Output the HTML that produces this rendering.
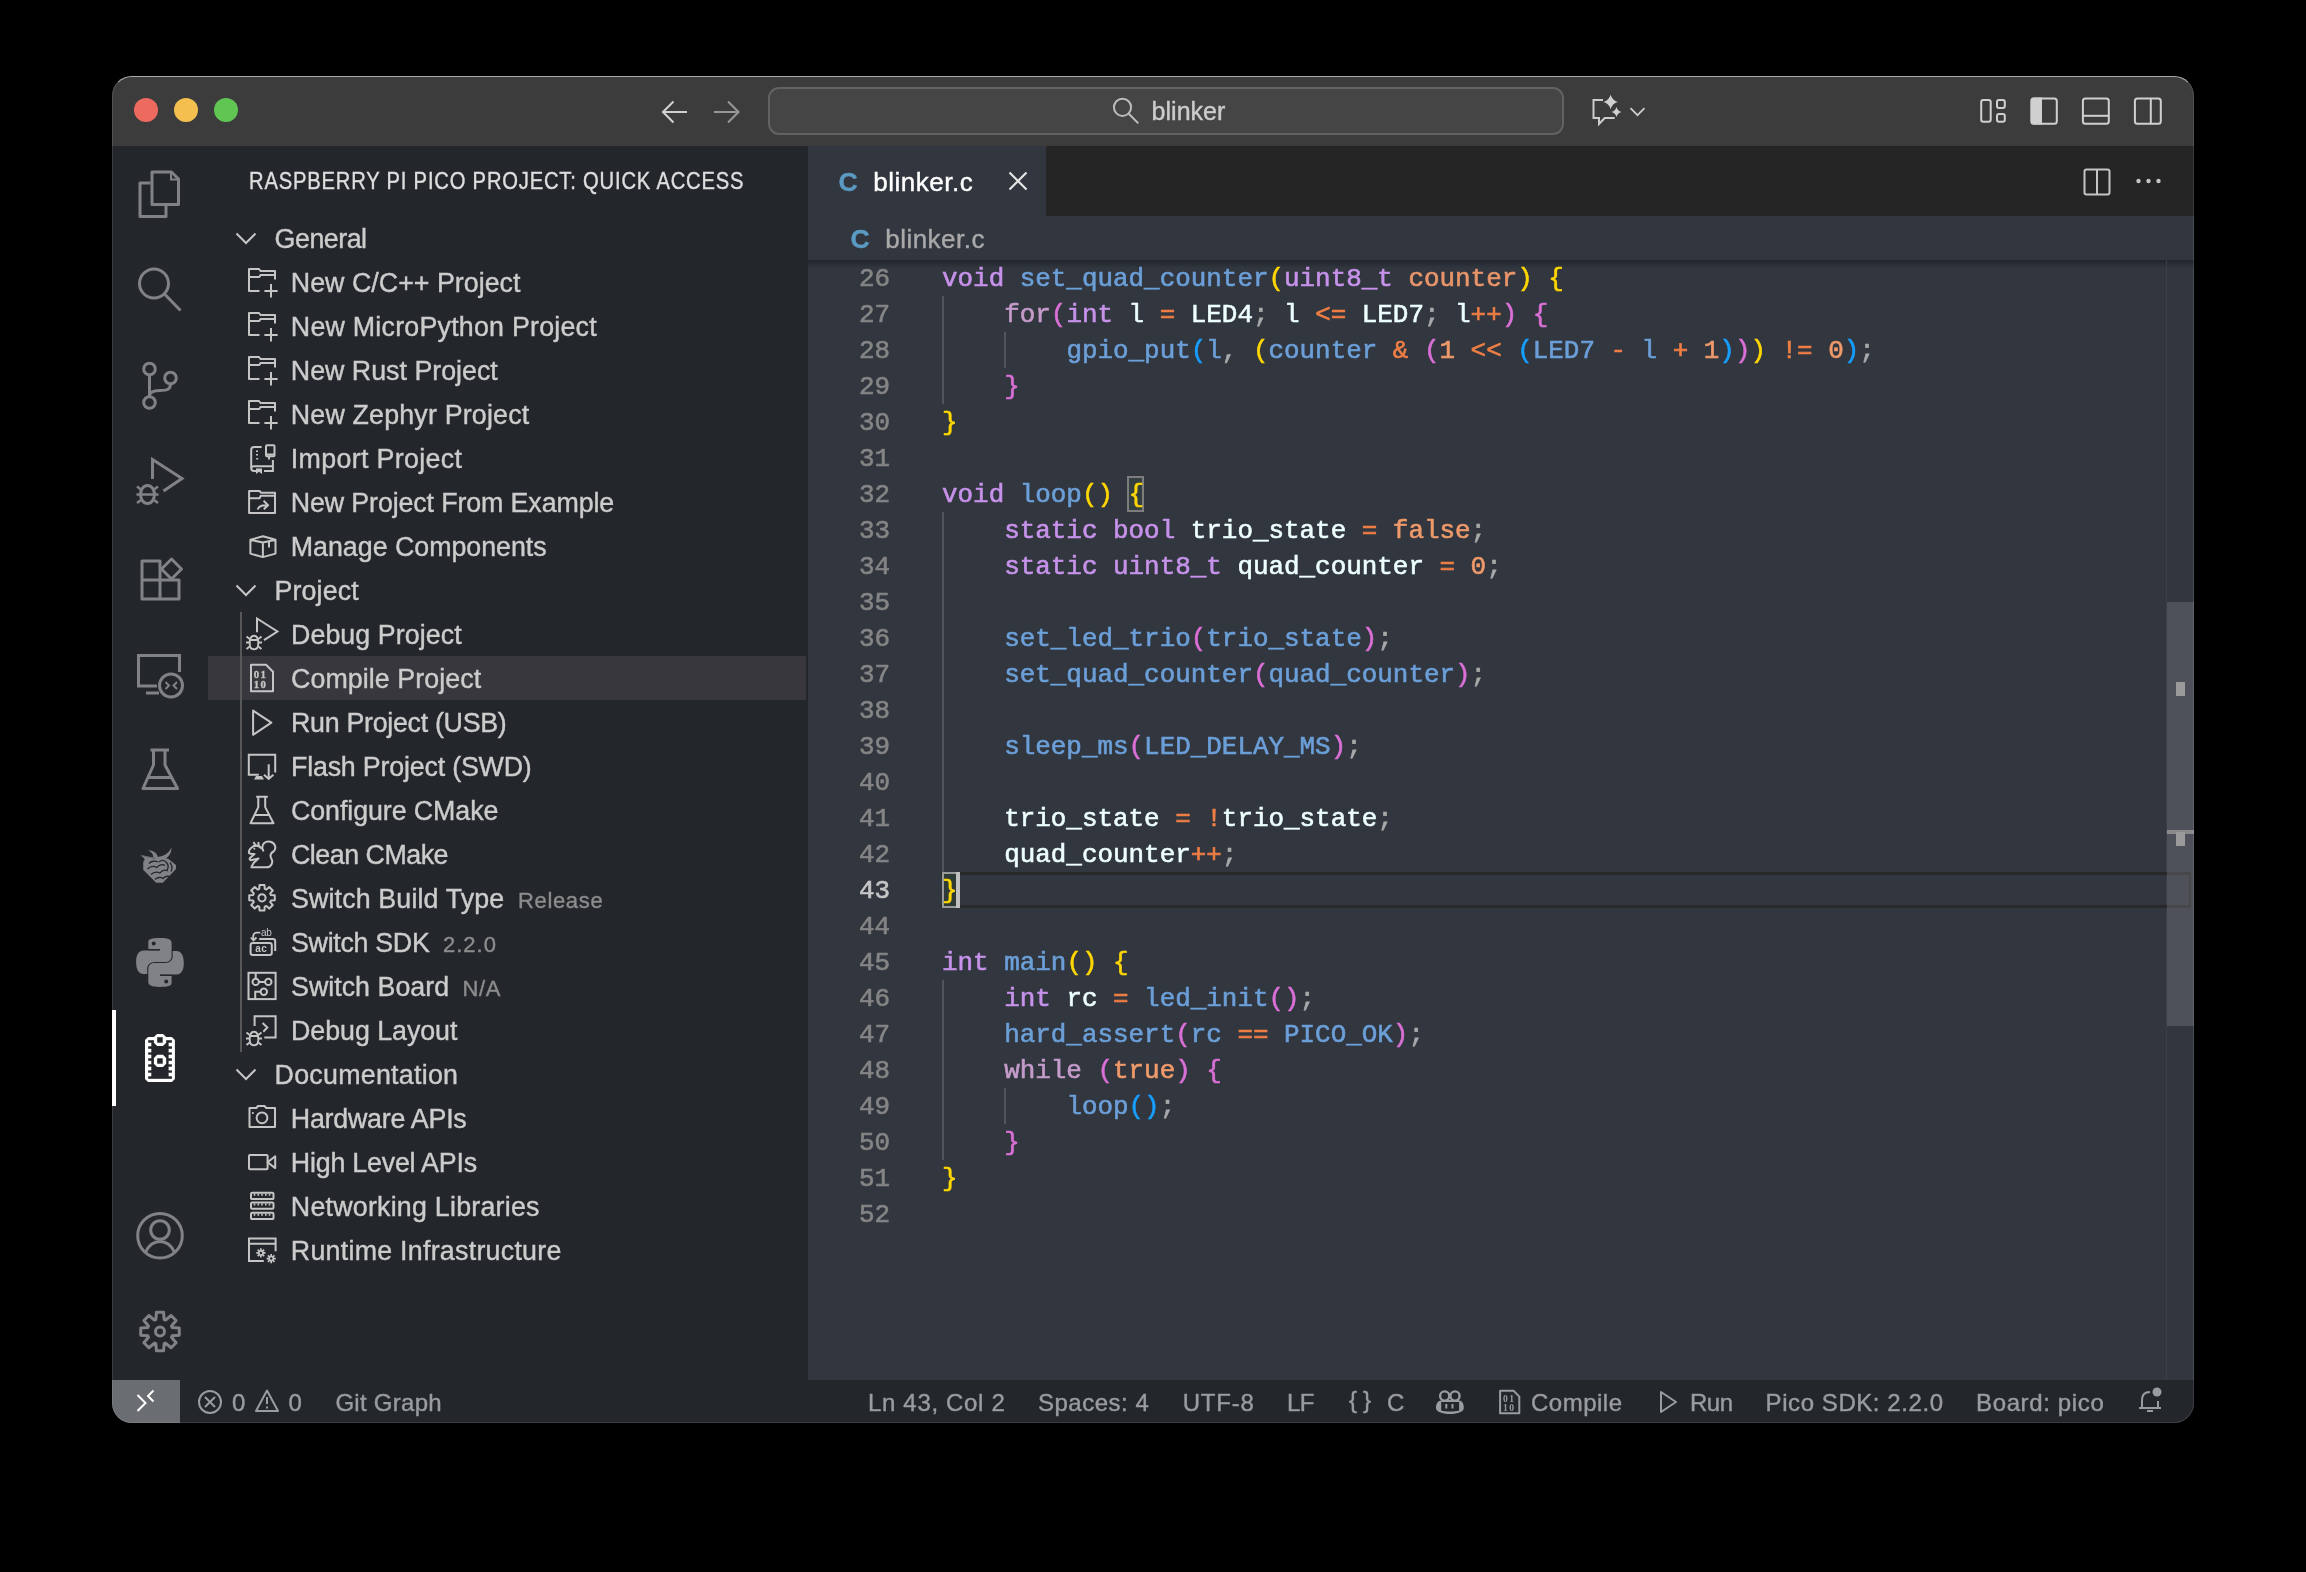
<!DOCTYPE html>
<html><head><meta charset="utf-8"><title>VS Code</title><style>
*{margin:0;padding:0;box-sizing:border-box}
html,body{width:2306px;height:1572px;background:#000;overflow:hidden}
body{position:relative;font-family:"Liberation Sans",sans-serif}
#win{position:absolute;left:112px;top:76px;width:2082px;height:1347px;border-radius:20px;overflow:hidden;background:#23262b}
#frame{position:absolute;left:112px;top:76px;width:2082px;height:1347px;border-radius:20px;border:1px solid rgba(255,255,255,0.11);border-top-color:#a8a8a8;pointer-events:none}
.p{position:absolute}
.t{position:absolute;white-space:pre;line-height:1;-webkit-text-stroke:0.4px}
.cl{position:absolute;left:0;font-family:"Liberation Mono",monospace;font-size:25.92px;white-space:pre;line-height:36px;height:36px;-webkit-text-stroke:0.6px}
svg{position:absolute;left:0;top:0}
</style></head><body>
<div id="win">
<div class="p" style="left:0px;top:0px;width:2082px;height:70px;background:#3c3c3c;"></div>
<div class="p" style="left:656px;top:11px;width:796px;height:48px;background:#454545;border:2px solid #626262;border-radius:11px;"></div>
<div class="p" style="left:696px;top:70px;width:1386px;height:70px;background:#252526;"></div>
<div class="p" style="left:696px;top:70px;width:238px;height:70px;background:#31363f;"></div>
<div class="p" style="left:696px;top:140px;width:1386px;height:1164px;background:#31363f;"></div>
<div class="p" style="left:696px;top:184px;width:1386px;height:8px;background:linear-gradient(#1e2127,rgba(30,33,39,0));opacity:.85;"></div>
<div class="p" style="left:2054px;top:184px;width:1px;height:1120px;background:#3a3f47;"></div>
<div class="p" style="left:829px;top:796px;width:1250px;height:3px;background:#282828;"></div>
<div class="p" style="left:829px;top:829px;width:1250px;height:3px;background:#282828;"></div>
<div class="p" style="left:2077px;top:796px;width:2px;height:36px;background:#282828;"></div>
<div class="p" style="left:830px;top:796px;width:16px;height:36px;background:#2e3a38;border:2px solid #9a9a9a;"></div>
<div class="p" style="left:844px;top:796px;width:4px;height:36px;background:#c0c0c0;"></div>
<div class="p" style="left:2055px;top:526px;width:27px;height:424px;background:rgba(125,127,132,0.38);"></div>
<div class="p" style="left:2064px;top:606px;width:9px;height:14px;background:#9a9a9a;"></div>
<div class="p" style="left:2055px;top:754px;width:27px;height:4px;background:#8a8a8a;"></div>
<div class="p" style="left:2064px;top:756px;width:9px;height:14px;background:#9a9a9a;"></div>
<div class="p" style="left:96px;top:580px;width:598px;height:44px;background:#37373d;"></div>
<div class="p" style="left:128px;top:536px;width:2px;height:440px;background:#585858;"></div>
<div class="p" style="left:0px;top:934px;width:4px;height:96px;background:#ffffff;"></div>
<div class="p" style="left:0px;top:1304px;width:2082px;height:43px;background:#23262b;"></div>
<div class="p" style="left:0px;top:1304px;width:68px;height:43px;background:#6a6d71;"></div>
</div>
<div id="txt" style="position:absolute;left:0;top:0;width:2306px;height:1572px;will-change:transform">
<div class="t" style="left:1151.6px;top:98.8px;font-size:25px;color:#cccccc;letter-spacing:0.02px;">blinker</div>
<div class="t" style="left:249.3px;top:170.4px;font-size:23.2px;color:#dedede;letter-spacing:0.94px;transform:scaleX(0.87);transform-origin:0 0;">RASPBERRY PI PICO PROJECT: QUICK ACCESS</div>
<div class="t" style="left:274.6px;top:226.2px;font-size:26.8px;color:#cccccc;letter-spacing:-0.48px;">General</div>
<div class="t" style="left:290.8px;top:270.2px;font-size:26.8px;color:#cccccc;letter-spacing:0.02px;">New C/C++ Project</div>
<div class="t" style="left:290.8px;top:314.2px;font-size:26.8px;color:#cccccc;letter-spacing:0.23px;">New MicroPython Project</div>
<div class="t" style="left:290.8px;top:358.2px;font-size:26.8px;color:#cccccc;">New Rust Project</div>
<div class="t" style="left:290.8px;top:402.2px;font-size:26.8px;color:#cccccc;letter-spacing:0.18px;">New Zephyr Project</div>
<div class="t" style="left:290.8px;top:446.2px;font-size:26.8px;color:#cccccc;letter-spacing:0.34px;">Import Project</div>
<div class="t" style="left:290.8px;top:490.2px;font-size:26.8px;color:#cccccc;letter-spacing:-0.12px;">New Project From Example</div>
<div class="t" style="left:290.8px;top:534.2px;font-size:26.8px;color:#cccccc;letter-spacing:-0.02px;">Manage Components</div>
<div class="t" style="left:274.5px;top:578.2px;font-size:26.8px;color:#cccccc;letter-spacing:0.13px;">Project</div>
<div class="t" style="left:291.0px;top:622.2px;font-size:26.8px;color:#cccccc;letter-spacing:0.07px;">Debug Project</div>
<div class="t" style="left:291.0px;top:666.2px;font-size:26.8px;color:#cccccc;letter-spacing:0.07px;">Compile Project</div>
<div class="t" style="left:291.0px;top:710.2px;font-size:26.8px;color:#cccccc;letter-spacing:-0.29px;">Run Project (USB)</div>
<div class="t" style="left:291.0px;top:754.2px;font-size:26.8px;color:#cccccc;letter-spacing:-0.19px;">Flash Project (SWD)</div>
<div class="t" style="left:291.0px;top:798.2px;font-size:26.8px;color:#cccccc;letter-spacing:-0.08px;">Configure CMake</div>
<div class="t" style="left:291.0px;top:842.2px;font-size:26.8px;color:#cccccc;letter-spacing:-0.49px;">Clean CMake</div>
<div class="t" style="left:291.0px;top:886.2px;font-size:26.8px;color:#cccccc;letter-spacing:0.14px;">Switch Build Type</div>
<div class="t" style="left:291.0px;top:930.2px;font-size:26.8px;color:#cccccc;letter-spacing:-0.30px;">Switch SDK</div>
<div class="t" style="left:291.0px;top:974.2px;font-size:26.8px;color:#cccccc;letter-spacing:0.02px;">Switch Board</div>
<div class="t" style="left:291.0px;top:1018.2px;font-size:26.8px;color:#cccccc;letter-spacing:-0.04px;">Debug Layout</div>
<div class="t" style="left:274.6px;top:1062.2px;font-size:26.8px;color:#cccccc;letter-spacing:0.26px;">Documentation</div>
<div class="t" style="left:290.8px;top:1106.2px;font-size:26.8px;color:#cccccc;letter-spacing:-0.23px;">Hardware APIs</div>
<div class="t" style="left:290.8px;top:1150.2px;font-size:26.8px;color:#cccccc;letter-spacing:-0.21px;">High Level APIs</div>
<div class="t" style="left:290.8px;top:1194.2px;font-size:26.8px;color:#cccccc;letter-spacing:0.23px;">Networking Libraries</div>
<div class="t" style="left:290.8px;top:1238.2px;font-size:26.8px;color:#cccccc;letter-spacing:0.26px;">Runtime Infrastructure</div>
<div class="t" style="left:518.0px;top:890.3px;font-size:22px;color:#8c8c8c;letter-spacing:0.65px;">Release</div>
<div class="t" style="left:443.0px;top:934.3px;font-size:22px;color:#8c8c8c;letter-spacing:1.00px;">2.2.0</div>
<div class="t" style="left:462.5px;top:978.3px;font-size:22px;color:#8c8c8c;letter-spacing:0.65px;">N/A</div>
<div class="t" style="left:873.3px;top:168.9px;font-size:26px;color:#ffffff;letter-spacing:0.51px;">blinker.c</div>
<div class="t" style="left:885.2px;top:225.9px;font-size:26px;color:#a9a9a9;letter-spacing:0.49px;">blinker.c</div>
<div class="t" style="left:838.5px;top:168.5px;font-size:26.5px;font-weight:bold;color:#5b9bc3">C</div>
<div class="t" style="left:850.5px;top:225.5px;font-size:26.5px;font-weight:bold;color:#5b9bc3">C</div>
<div class="t" style="left:232.0px;top:1390.6px;font-size:24px;color:#999ca0;">0</div>
<div class="t" style="left:288.6px;top:1390.6px;font-size:24px;color:#999ca0;">0</div>
<div class="t" style="left:335.4px;top:1390.6px;font-size:24px;color:#999ca0;letter-spacing:0.28px;">Git Graph</div>
<div class="t" style="left:868.0px;top:1390.6px;font-size:24px;color:#999ca0;letter-spacing:0.67px;">Ln 43, Col 2</div>
<div class="t" style="left:1038.0px;top:1390.6px;font-size:24px;color:#999ca0;letter-spacing:0.50px;">Spaces: 4</div>
<div class="t" style="left:1182.7px;top:1390.6px;font-size:24px;color:#999ca0;letter-spacing:0.77px;">UTF-8</div>
<div class="t" style="left:1287.0px;top:1390.6px;font-size:24px;color:#999ca0;letter-spacing:-0.50px;">LF</div>
<div class="t" style="left:1349.0px;top:1388.1px;font-size:24px;color:#999ca0;letter-spacing:-0.35px;">{ }</div>
<div class="t" style="left:1387.0px;top:1390.6px;font-size:24px;color:#999ca0;">C</div>
<div class="t" style="left:1531.0px;top:1390.6px;font-size:24px;color:#999ca0;letter-spacing:0.50px;">Compile</div>
<div class="t" style="left:1690.0px;top:1390.6px;font-size:24px;color:#999ca0;letter-spacing:-0.50px;">Run</div>
<div class="t" style="left:1765.6px;top:1390.6px;font-size:24px;color:#999ca0;letter-spacing:0.57px;">Pico SDK: 2.2.0</div>
<div class="t" style="left:1976.0px;top:1390.6px;font-size:24px;color:#999ca0;letter-spacing:0.64px;">Board: pico</div>
<div class="p" style="left:942px;top:296px;width:2px;height:108px;background:#50555c"></div>
<div class="p" style="left:942px;top:512px;width:2px;height:360px;background:#50555c"></div>
<div class="p" style="left:942px;top:980px;width:2px;height:180px;background:#50555c"></div>
<div class="p" style="left:1004px;top:332px;width:2px;height:36px;background:#50555c"></div>
<div class="p" style="left:1004px;top:1088px;width:2px;height:36px;background:#50555c"></div>
<div class="p" style="left:1127px;top:476px;width:17px;height:36px;border:2px solid #7d7d7d;background:rgba(60,80,70,0.35)"></div>
<div class="cl" style="left:858.9px;top:261px;color:#858585">26</div>
<div class="cl" style="left:942px;top:261px"><span style="color:#c792ea">void</span> <span style="color:#6c9fd8">set_quad_counter</span><span style="color:#ffd700">(</span><span style="color:#c792ea">uint8_t</span> <span style="color:#e9956a">counter</span><span style="color:#ffd700">)</span> <span style="color:#ffd700">{</span></div>
<div class="cl" style="left:858.9px;top:297px;color:#858585">27</div>
<div class="cl" style="left:942px;top:297px">    <span style="color:#c59bca">for</span><span style="color:#da70d6">(</span><span style="color:#c792ea">int</span> <span style="color:#eeffff">l</span> <span style="color:#f07f45">=</span> <span style="color:#eeffff">LED4</span><span style="color:#a9a9a9">;</span> <span style="color:#eeffff">l</span> <span style="color:#f07f45">&lt;=</span> <span style="color:#eeffff">LED7</span><span style="color:#a9a9a9">;</span> <span style="color:#eeffff">l</span><span style="color:#f07f45">++</span><span style="color:#da70d6">)</span> <span style="color:#da70d6">{</span></div>
<div class="cl" style="left:858.9px;top:333px;color:#858585">28</div>
<div class="cl" style="left:942px;top:333px">        <span style="color:#6c9fd8">gpio_put</span><span style="color:#179fff">(</span><span style="color:#6c9fd8">l</span><span style="color:#a9a9a9">,</span> <span style="color:#ffd700">(</span><span style="color:#6c9fd8">counter</span> <span style="color:#f07f45">&amp;</span> <span style="color:#da70d6">(</span><span style="color:#ef9a6b">1</span> <span style="color:#f07f45">&lt;&lt;</span> <span style="color:#179fff">(</span><span style="color:#6c9fd8">LED7</span> <span style="color:#f07f45">-</span> <span style="color:#6c9fd8">l</span> <span style="color:#f07f45">+</span> <span style="color:#ef9a6b">1</span><span style="color:#179fff">)</span><span style="color:#da70d6">)</span><span style="color:#ffd700">)</span> <span style="color:#f07f45">!=</span> <span style="color:#ef9a6b">0</span><span style="color:#179fff">)</span><span style="color:#a9a9a9">;</span></div>
<div class="cl" style="left:858.9px;top:369px;color:#858585">29</div>
<div class="cl" style="left:942px;top:369px">    <span style="color:#da70d6">}</span></div>
<div class="cl" style="left:858.9px;top:405px;color:#858585">30</div>
<div class="cl" style="left:942px;top:405px"><span style="color:#ffd700">}</span></div>
<div class="cl" style="left:858.9px;top:441px;color:#858585">31</div>
<div class="cl" style="left:858.9px;top:477px;color:#858585">32</div>
<div class="cl" style="left:942px;top:477px"><span style="color:#c792ea">void</span> <span style="color:#6c9fd8">loop</span><span style="color:#ffd700">()</span> <span style="color:#ffd700">{</span></div>
<div class="cl" style="left:858.9px;top:513px;color:#858585">33</div>
<div class="cl" style="left:942px;top:513px">    <span style="color:#c792ea">static</span> <span style="color:#c792ea">bool</span> <span style="color:#eeffff">trio_state</span> <span style="color:#f07f45">=</span> <span style="color:#ef9a6b">false</span><span style="color:#a9a9a9">;</span></div>
<div class="cl" style="left:858.9px;top:549px;color:#858585">34</div>
<div class="cl" style="left:942px;top:549px">    <span style="color:#c792ea">static</span> <span style="color:#c792ea">uint8_t</span> <span style="color:#eeffff">quad_counter</span> <span style="color:#f07f45">=</span> <span style="color:#ef9a6b">0</span><span style="color:#a9a9a9">;</span></div>
<div class="cl" style="left:858.9px;top:585px;color:#858585">35</div>
<div class="cl" style="left:858.9px;top:621px;color:#858585">36</div>
<div class="cl" style="left:942px;top:621px">    <span style="color:#6c9fd8">set_led_trio</span><span style="color:#da70d6">(</span><span style="color:#6c9fd8">trio_state</span><span style="color:#da70d6">)</span><span style="color:#a9a9a9">;</span></div>
<div class="cl" style="left:858.9px;top:657px;color:#858585">37</div>
<div class="cl" style="left:942px;top:657px">    <span style="color:#6c9fd8">set_quad_counter</span><span style="color:#da70d6">(</span><span style="color:#6c9fd8">quad_counter</span><span style="color:#da70d6">)</span><span style="color:#a9a9a9">;</span></div>
<div class="cl" style="left:858.9px;top:693px;color:#858585">38</div>
<div class="cl" style="left:858.9px;top:729px;color:#858585">39</div>
<div class="cl" style="left:942px;top:729px">    <span style="color:#6c9fd8">sleep_ms</span><span style="color:#da70d6">(</span><span style="color:#6c9fd8">LED_DELAY_MS</span><span style="color:#da70d6">)</span><span style="color:#a9a9a9">;</span></div>
<div class="cl" style="left:858.9px;top:765px;color:#858585">40</div>
<div class="cl" style="left:858.9px;top:801px;color:#858585">41</div>
<div class="cl" style="left:942px;top:801px">    <span style="color:#eeffff">trio_state</span> <span style="color:#f07f45">=</span> <span style="color:#f07f45">!</span><span style="color:#eeffff">trio_state</span><span style="color:#a9a9a9">;</span></div>
<div class="cl" style="left:858.9px;top:837px;color:#858585">42</div>
<div class="cl" style="left:942px;top:837px">    <span style="color:#eeffff">quad_counter</span><span style="color:#f07f45">++</span><span style="color:#a9a9a9">;</span></div>
<div class="cl" style="left:858.9px;top:873px;color:#c6c6c6">43</div>
<div class="cl" style="left:942px;top:873px"><span style="color:#ffd700">}</span></div>
<div class="cl" style="left:858.9px;top:909px;color:#858585">44</div>
<div class="cl" style="left:858.9px;top:945px;color:#858585">45</div>
<div class="cl" style="left:942px;top:945px"><span style="color:#c792ea">int</span> <span style="color:#6c9fd8">main</span><span style="color:#ffd700">()</span> <span style="color:#ffd700">{</span></div>
<div class="cl" style="left:858.9px;top:981px;color:#858585">46</div>
<div class="cl" style="left:942px;top:981px">    <span style="color:#c792ea">int</span> <span style="color:#eeffff">rc</span> <span style="color:#f07f45">=</span> <span style="color:#6c9fd8">led_init</span><span style="color:#da70d6">()</span><span style="color:#a9a9a9">;</span></div>
<div class="cl" style="left:858.9px;top:1017px;color:#858585">47</div>
<div class="cl" style="left:942px;top:1017px">    <span style="color:#6c9fd8">hard_assert</span><span style="color:#da70d6">(</span><span style="color:#6c9fd8">rc</span> <span style="color:#f07f45">==</span> <span style="color:#6c9fd8">PICO_OK</span><span style="color:#da70d6">)</span><span style="color:#a9a9a9">;</span></div>
<div class="cl" style="left:858.9px;top:1053px;color:#858585">48</div>
<div class="cl" style="left:942px;top:1053px">    <span style="color:#c59bca">while</span> <span style="color:#da70d6">(</span><span style="color:#ef9a6b">true</span><span style="color:#da70d6">)</span> <span style="color:#da70d6">{</span></div>
<div class="cl" style="left:858.9px;top:1089px;color:#858585">49</div>
<div class="cl" style="left:942px;top:1089px">        <span style="color:#6c9fd8">loop</span><span style="color:#179fff">()</span><span style="color:#a9a9a9">;</span></div>
<div class="cl" style="left:858.9px;top:1125px;color:#858585">50</div>
<div class="cl" style="left:942px;top:1125px">    <span style="color:#da70d6">}</span></div>
<div class="cl" style="left:858.9px;top:1161px;color:#858585">51</div>
<div class="cl" style="left:942px;top:1161px"><span style="color:#ffd700">}</span></div>
<div class="cl" style="left:858.9px;top:1197px;color:#858585">52</div>
</div>
<svg width="2306" height="1572" viewBox="0 0 2306 1572" fill="none" stroke-linecap="butt" stroke-linejoin="miter">
<circle cx="146" cy="110" r="12" fill="#ed6a5e"/><circle cx="186" cy="110" r="12" fill="#f4bf4f"/><circle cx="226" cy="110" r="12" fill="#61c554"/>
<path d="M663 112H687M673.5 101.5L663 112L673.5 122.5" stroke="#d0d0d0" stroke-width="2.1"/>
<path d="M714 112H738.5M728 101.5L738.5 112L728 122.5" stroke="#979797" stroke-width="2.1"/>
<circle cx="1122.5" cy="107.3" r="8.6" stroke="#bdbdbd" stroke-width="2"/><path d="M1128.8 113.8L1138.3 123.4" stroke="#bdbdbd" stroke-width="2"/>
<path d="M1603 100H1593.5V118H1599V124L1604.7 118H1614.7" stroke="#cccccc" stroke-width="2"/>
<path d="M1610.6 94.8Q1612.184 100.416 1617.8 102Q1612.184 103.584 1610.6 109.2Q1609.0159999999998 103.584 1603.3999999999999 102Q1609.0159999999998 100.416 1610.6 94.8Z" fill="#d0d0d0"/><path d="M1616.5 107.1Q1617.578 110.922 1621.4 112Q1617.578 113.078 1616.5 116.9Q1615.422 113.078 1611.6 112Q1615.422 110.922 1616.5 107.1Z" fill="#d0d0d0"/>
<path d="M1630.5 108.2L1637.5 115.2L1644.5 108.2" stroke="#cccccc" stroke-width="1.8"/>
<rect x="1981.2" y="99.9" width="9.5" height="21.9" rx="2.2" stroke="#d0d0d0" stroke-width="2"/><rect x="1997" y="99.9" width="7.8" height="8" rx="2" stroke="#d0d0d0" stroke-width="2"/><rect x="1997" y="114" width="7.8" height="7.8" rx="2" stroke="#d0d0d0" stroke-width="2"/>
<rect x="2031.3" y="98.4" width="25.5" height="25.3" rx="2.5" stroke="#d0d0d0" stroke-width="2"/><path d="M2031 101V122C2031 123.5 2032 124.5 2033.5 124.5H2042V97.5H2033.5C2032 97.5 2031 98.5 2031 100Z" fill="#d0d0d0"/>
<rect x="2082.9" y="98.4" width="25.9" height="25.3" rx="2.5" stroke="#d0d0d0" stroke-width="2"/><path d="M2083 115.8H2109" stroke="#d0d0d0" stroke-width="2"/>
<rect x="2134.9" y="98.4" width="25.9" height="25.3" rx="2.5" stroke="#d0d0d0" stroke-width="2"/><path d="M2150.8 98.5V123.5" stroke="#d0d0d0" stroke-width="2"/>
<path d="M1009.5 172.5L1026.5 189.5M1026.5 172.5L1009.5 189.5" stroke="#e6e6e6" stroke-width="2.2"/>
<rect x="2084.5" y="169.5" width="25" height="25" rx="2" stroke="#c5c5c5" stroke-width="2"/><path d="M2097 170V194" stroke="#c5c5c5" stroke-width="2"/>
<circle cx="2138.5" cy="181" r="2.2" fill="#c5c5c5"/><circle cx="2148.5" cy="181" r="2.2" fill="#c5c5c5"/><circle cx="2158.5" cy="181" r="2.2" fill="#c5c5c5"/>
<path d="M150.5 183H140V216.5H166V206" stroke="#808285" stroke-width="3" stroke-linejoin="round"/>
<path d="M152 172H171.5L178.5 179V204.5H152Z" stroke="#808285" stroke-width="3" stroke-linejoin="round"/><path d="M171 172V179.5H178.5" stroke="#808285" stroke-width="2"/>
<circle cx="154" cy="283.5" r="14.5" stroke="#808285" stroke-width="3"/><path d="M164.5 294L180.5 310.5" stroke="#808285" stroke-width="3"/>
<circle cx="149.5" cy="369" r="5.8" stroke="#808285" stroke-width="3"/><circle cx="170.5" cy="378" r="5.8" stroke="#808285" stroke-width="3"/><circle cx="149.5" cy="402.5" r="5.8" stroke="#808285" stroke-width="3"/>
<path d="M149.5 375V396.5M170.5 384C170.5 390 166 390.5 160 390.5C154 390.5 149.5 391.5 149.5 396" stroke="#808285" stroke-width="3"/>
<path d="M152.5 479V459.5L182 478.5L163.5 491" stroke="#808285" stroke-width="3"/>
<ellipse cx="147.5" cy="494.5" rx="7" ry="9" stroke="#808285" stroke-width="3"/><path d="M140 494.5H155M137 486.5L141 489.5M158 486.5L154 489.5M136.5 494.5H140.5M158.5 494.5H154.5M137 503L141 500M158 503L154 500" stroke="#808285" stroke-width="2.5"/>
<path d="M142 561H160V599H142ZM142 580H179V599H160" stroke="#808285" stroke-width="3" stroke-linejoin="round"/><path d="M171.5 559L181.5 569L171.5 579L161.5 569Z" stroke="#808285" stroke-width="3" stroke-linejoin="round"/>
<path d="M157 686H138.5V655.5H179.5V672" stroke="#808285" stroke-width="3"/><path d="M146 693H159" stroke="#808285" stroke-width="3"/><circle cx="171" cy="685.5" r="11.5" stroke="#808285" stroke-width="3"/>
<path d="M165.5 682L169 685.5L165.5 689M177 682L173.5 685.5L177 689" stroke="#808285" stroke-width="2"/>
<path d="M150.5 750H169M153.5 750V765L143 788.5H177.5L165 765V750M148 777.5H172" stroke="#808285" stroke-width="3" stroke-linejoin="round"/>
<path d="M143.2 863.2C143.2 860.5 145 858.5 148 858.5H166.5L169.7 858.9L176 864.5V869.1L162.8 882.7H156.1L143.2 869.8Z" fill="#808285"/>
<path d="M140.3 855.2L152.5 858.5L158 857.5C157 853 153.5 850.5 148.2 850.3C151.5 852 153 854.5 153.5 857L152 857.5C149 856.5 145 855.5 140.3 855.2Z" fill="#808285"/><path d="M140.3 855.2C143.5 857 145.5 859.5 146.5 862.5L152.5 858.5Z" fill="#808285"/>
<path d="M171.4 847.3C171.8 853.5 168 858.5 162 860.5L154 860L156.5 857C163 857 169 853.5 171.4 847.3Z" fill="#808285"/>
<path d="M149 863.5C151 861 155 860.5 158 862M147.5 869C150 866.5 154 866 157 867.5C159 864.5 162.5 864 165 865.5M151 874.5C153.5 872 157 871.5 160 873C162 870 165.5 869.5 168 871M155 879.5C157.5 877 161 877 163 878.5C165 876 167.5 876 169.5 876.5M159 862C161.5 859.5 164.5 860 166.5 862.5C168.5 865 168.5 868 167 870M170 862.5C172 865 172.5 868.5 171 871.5" stroke="#23262b" stroke-width="1.3"/>
<path d="M168.6 858.2L176.8 864.6" stroke="#23262b" stroke-width="1.5"/>
<path d="M159.8 950.4H144C139 950.4 136.1 954 136.1 962C136.1 970 139 974 143.5 974H147.2V969C147.2 965 150 962 155 962H165.5C169.5 962 171.6 959.5 171.6 955.5V943C171.6 940 169 938.1 160 938.1C151 938.1 148.3 939.5 148.3 942V949.5H159.8Z" fill="#808285"/><path d="M159.8 950.4H144C139 950.4 136.1 954 136.1 962C136.1 970 139 974 143.5 974H147.2V969C147.2 965 150 962 155 962H165.5C169.5 962 171.6 959.5 171.6 955.5V943C171.6 940 169 938.1 160 938.1C151 938.1 148.3 939.5 148.3 942V949.5H159.8Z" fill="#808285" transform="rotate(180 159.95 962.5)"/>
<path d="M148 949.6H160M159.9 975.4H171.9" stroke="#23262b" stroke-width="1.2"/><circle cx="153.7" cy="943.5" r="2" fill="#23262b"/><circle cx="166.2" cy="981.5" r="2" fill="#23262b"/>
<path d="M148 1037H171.9L174.9 1040V1079L171.9 1082H148L145 1079V1040Z" fill="#ffffff"/><rect x="148.2" y="1040.2" width="23.7" height="38.6" fill="#23262b"/>
<rect x="148" y="1042.7" width="3.3" height="3.6" fill="#ffffff"/><rect x="168.6" y="1042.7" width="3.4" height="3.6" fill="#ffffff"/><rect x="148" y="1048.8" width="3.3" height="3.6" fill="#ffffff"/><rect x="168.6" y="1048.8" width="3.4" height="3.6" fill="#ffffff"/><rect x="148" y="1054.7" width="3.3" height="3.6" fill="#ffffff"/><rect x="168.6" y="1054.7" width="3.4" height="3.6" fill="#ffffff"/><rect x="148" y="1060.8" width="3.3" height="3.5" fill="#ffffff"/><rect x="168.6" y="1060.8" width="3.4" height="3.5" fill="#ffffff"/><rect x="148" y="1066.7" width="3.3" height="3.7" fill="#ffffff"/><rect x="168.6" y="1066.7" width="3.4" height="3.7" fill="#ffffff"/><rect x="148" y="1072.7" width="3.3" height="3.6" fill="#ffffff"/><rect x="168.6" y="1072.7" width="3.4" height="3.6" fill="#ffffff"/>
<path d="M157.1 1033.9H163.0L166.2 1037.1000000000001V1042.7L163.0 1045.9H157.1L153.9 1042.7V1037.1000000000001Z" fill="#ffffff"/><rect x="157.2" y="1037.2" width="5.5" height="5.5" fill="#23262b"/>
<path d="M157.1 1054.7H163.0L166.2 1057.9V1063.7L163.0 1066.9H157.1L153.9 1063.7V1057.9Z" fill="#ffffff"/><rect x="157.2" y="1058.3" width="5.5" height="5.4" fill="#23262b"/>
<circle cx="160" cy="1235.7" r="22.3" stroke="#808285" stroke-width="3"/><circle cx="160" cy="1230" r="9.3" stroke="#808285" stroke-width="3"/><path d="M145.5 1252.5C148.5 1245.5 153.5 1241.5 160 1241.5C166.5 1241.5 171.5 1245.5 174.5 1252.5" stroke="#808285" stroke-width="3"/>
<path d="M155.83 1319.50 L156.43 1312.33 L163.57 1312.33 L164.17 1319.50 L165.61 1320.10 L171.10 1315.45 L176.15 1320.50 L171.50 1325.99 L172.10 1327.43 L179.27 1328.03 L179.27 1335.17 L172.10 1335.77 L171.50 1337.21 L176.15 1342.70 L171.10 1347.75 L165.61 1343.10 L164.17 1343.70 L163.57 1350.87 L156.43 1350.87 L155.83 1343.70 L154.39 1343.10 L148.90 1347.75 L143.85 1342.70 L148.50 1337.21 L147.90 1335.77 L140.73 1335.17 L140.73 1328.03 L147.90 1327.43 L148.50 1325.99 L143.85 1320.50 L148.90 1315.45 L154.39 1320.10Z" stroke="#808285" stroke-width="3" stroke-linejoin="round"/><circle cx="160" cy="1331.6" r="4.5" stroke="#808285" stroke-width="3"/>
<path d="M236.5 233.5L246 243L255.5 233.5" stroke="#c5c5c5" stroke-width="2"/>
<path d="M236.5 585.5L246 595L255.5 585.5" stroke="#c5c5c5" stroke-width="2"/>
<path d="M236.5 1069.5L246 1079L255.5 1069.5" stroke="#c5c5c5" stroke-width="2"/>
<g transform="translate(0 0)"><path d="M259.5 291H249V269H259L260.5 271H275V279.6M249 277H259.3L260.5 275H275" stroke="#c5c5c5" stroke-width="2" stroke-linejoin="round"/><path d="M271 284.1V297.6M264.4 291H277.6" stroke="#c5c5c5" stroke-width="2"/></g>
<g transform="translate(0 44)"><path d="M259.5 291H249V269H259L260.5 271H275V279.6M249 277H259.3L260.5 275H275" stroke="#c5c5c5" stroke-width="2" stroke-linejoin="round"/><path d="M271 284.1V297.6M264.4 291H277.6" stroke="#c5c5c5" stroke-width="2"/></g>
<g transform="translate(0 88)"><path d="M259.5 291H249V269H259L260.5 271H275V279.6M249 277H259.3L260.5 275H275" stroke="#c5c5c5" stroke-width="2" stroke-linejoin="round"/><path d="M271 284.1V297.6M264.4 291H277.6" stroke="#c5c5c5" stroke-width="2"/></g>
<g transform="translate(0 132)"><path d="M259.5 291H249V269H259L260.5 271H275V279.6M249 277H259.3L260.5 275H275" stroke="#c5c5c5" stroke-width="2" stroke-linejoin="round"/><path d="M271 284.1V297.6M264.4 291H277.6" stroke="#c5c5c5" stroke-width="2"/></g>
<path d="M261.6 447H254C252.3 447 251.2 448.2 251.2 450V468C251.2 470 252.3 471 254 471H256M251.2 468.5C251.2 467 252.3 466.3 254 466.3H272.9V460M264 471H272.9V466" stroke="#c5c5c5" stroke-width="2"/>
<path d="M257 450.5V452M257 454V455.5M257.2 458V459.5" stroke="#c5c5c5" stroke-width="2"/><path d="M256 468.5H262V474L259 471.8L256 474Z" fill="#c5c5c5"/>
<rect x="266" y="445.2" width="8.5" height="11" rx="1" stroke="#c5c5c5" stroke-width="2"/><path d="M266 454.6H274.5M269 456V459.4" stroke="#c5c5c5" stroke-width="2"/>
<path d="M249.1 513V490.9H259.5L260.8 492.7H275V513ZM249.1 498.3H259.5L260.8 495.7H275" stroke="#c5c5c5" stroke-width="2" stroke-linejoin="round"/><path d="M257.7 509.5C258.5 506 261.5 504.8 267.5 505.2M263.6 500.8L268 505.2L263.8 509.3" stroke="#c5c5c5" stroke-width="2"/>
<path d="M262.9 536.3L275.5 539.8V553.6L262.9 557.1L250.4 553.6V539.8ZM250.4 539.8L262.9 542.6L275.5 539.8M262.9 542.6V557.1M269 541V547.6" stroke="#c5c5c5" stroke-width="2" stroke-linejoin="round"/>
<path d="M257 632.3V618.5L277.4 631.5L264 640.1" stroke="#c5c5c5" stroke-width="2"/><path d="M249.7 643.5C249.7 638.5 251.5 635.7 254 635.7C256.5 635.7 258.3 638.5 258.3 643.5C258.3 647.0 256.5 649.3 254 649.3C251.5 649.3 249.7 647.0 249.7 643.5Z" stroke="#c5c5c5" stroke-width="1.9"/><path d="M249.7 640.0H258.3M246 642.5H249.7M258.3 642.5H262M246.5 636.5L249.7 639.0M261.5 636.5L258.3 639.0M246.5 649.0L249.7 646.5M261.5 649.0L258.3 646.5" stroke="#c5c5c5" stroke-width="1.9"/>
<path d="M251 664.8H266.1L273 671.7V691.2H251Z" stroke="#c5c5c5" stroke-width="2" stroke-linejoin="round"/>
<text x="253.8" y="677.5" font-family="Liberation Serif" font-weight="bold" font-size="10.8" fill="#c5c5c5" stroke="#c5c5c5" stroke-width="0.3" letter-spacing="1.2">01</text><text x="253.8" y="687.9" font-family="Liberation Serif" font-weight="bold" font-size="10.8" fill="#c5c5c5" stroke="#c5c5c5" stroke-width="0.3" letter-spacing="1.2">10</text>
<path d="M253.1 710.6L271.3 722.7L253.1 734.8Z" stroke="#c5c5c5" stroke-width="2" stroke-linejoin="round"/>
<path d="M258.8 774.7H248.8V754.8H275.2V772.5" stroke="#c5c5c5" stroke-width="2"/><path d="M268.7 764.3V778.5M264 774.8L268.7 779L273.4 774.8" stroke="#c5c5c5" stroke-width="2"/><path d="M256 776H262L264 779.5H254Z" fill="#c5c5c5"/>
<path d="M256.2 796.8H267.8M258.3 796.8V807.1L250.5 823.2H273.5L265.2 807.1V796.8M254.3 814.9H269.5" stroke="#c5c5c5" stroke-width="2" stroke-linejoin="round"/>
<path d="M250.5 867.3H266.5C271.5 867.3 273.5 862 271.3 858.5C269.8 856 270.5 853 273.5 851.5C276.5 849 276 843.5 270.5 841.8C265.5 840.5 261.5 844 262.5 848.5L263.5 851.5" stroke="#c5c5c5" stroke-width="2" stroke-linejoin="round"/>
<path d="M253.5 842L255.5 845.5M258.3 842L258.8 846M262 849C259.5 845.5 256 845 253 846.5C250 848.5 248.5 851 249 853C250.5 854.5 253 854 254.5 854L250 858C249 859.5 250.5 860.5 252 860L258.5 858.5L254 862.5L251.5 866.5" stroke="#c5c5c5" stroke-width="2" stroke-linejoin="round"/><circle cx="254.3" cy="848.7" r="1" fill="#c5c5c5"/>
<path d="M259.28 888.91 L259.52 885.04 L264.48 885.04 L264.72 888.91 L266.37 889.59 L269.27 887.02 L272.78 890.53 L270.21 893.43 L270.89 895.08 L274.76 895.32 L274.76 900.28 L270.89 900.52 L270.21 902.17 L272.78 905.07 L269.27 908.58 L266.37 906.01 L264.72 906.69 L264.48 910.56 L259.52 910.56 L259.28 906.69 L257.63 906.01 L254.73 908.58 L251.22 905.07 L253.79 902.17 L253.11 900.52 L249.24 900.28 L249.24 895.32 L253.11 895.08 L253.79 893.43 L251.22 890.53 L254.73 887.02 L257.63 889.59Z" stroke="#c5c5c5" stroke-width="2" stroke-linejoin="round"/><circle cx="262" cy="897.8" r="3.6" stroke="#c5c5c5" stroke-width="2"/>
<rect x="250.6" y="943" width="21.2" height="12" rx="2.2" stroke="#c5c5c5" stroke-width="2"/><path d="M259.2 939H273C274.3 939 275.2 940 275.2 941.3V951" stroke="#c5c5c5" stroke-width="2"/>
<path d="M260.3 932.7H256.5C254.5 932.7 253.2 934.5 253.2 936.5V940" stroke="#c5c5c5" stroke-width="1.8"/><path d="M250.8 937.5L253.5 940.5L256.5 937.5" stroke="#c5c5c5" stroke-width="1.8"/>
<text x="261" y="936.3" font-family="Liberation Sans" font-size="10" fill="#c5c5c5" letter-spacing="-0.3">ab</text><text x="255.2" y="952" font-family="Liberation Sans" font-size="10" font-weight="bold" fill="#c5c5c5" letter-spacing="0.6">ac</text>
<rect x="248.5" y="972.8" width="27.1" height="26.3" stroke="#c5c5c5" stroke-width="2"/><circle cx="255.7" cy="981.9" r="3.2" stroke="#c5c5c5" stroke-width="2"/><circle cx="268.3" cy="981.9" r="3.2" stroke="#c5c5c5" stroke-width="2"/><circle cx="263.8" cy="991.7" r="3.2" stroke="#c5c5c5" stroke-width="2"/><path d="M258.9 981.9H265.1M255.7 972.8V978.7M260.6 991.7H255.2V999" stroke="#c5c5c5" stroke-width="2"/>
<path d="M254.6 1026V1016.3H275.6V1037.5H264.3" stroke="#c5c5c5" stroke-width="2"/><path d="M262.6 1023.1L267.3 1027.5L263.3 1031.7" stroke="#c5c5c5" stroke-width="2"/><path d="M249.7 1039.5C249.7 1034.5 251.5 1031.7 254 1031.7C256.5 1031.7 258.3 1034.5 258.3 1039.5C258.3 1043.0 256.5 1045.3 254 1045.3C251.5 1045.3 249.7 1043.0 249.7 1039.5Z" stroke="#c5c5c5" stroke-width="1.9"/><path d="M249.7 1036.0H258.3M246 1038.5H249.7M258.3 1038.5H262M246.5 1032.5L249.7 1035.0M261.5 1032.5L258.3 1035.0M246.5 1045.0L249.7 1042.5M261.5 1045.0L258.3 1042.5" stroke="#c5c5c5" stroke-width="1.9"/>
<path d="M249.5 1108H256.3L258 1106H264.5L266.3 1108H275V1127H249.5Z" stroke="#c5c5c5" stroke-width="2" stroke-linejoin="round"/><circle cx="262" cy="1117.8" r="5.4" stroke="#c5c5c5" stroke-width="2"/><circle cx="252.9" cy="1113" r="1.1" fill="#c5c5c5"/>
<rect x="249" y="1155" width="18.6" height="14.2" rx="1" stroke="#c5c5c5" stroke-width="2"/><path d="M267.6 1162.2L275.2 1156.3V1168.1Z" stroke="#c5c5c5" stroke-width="2" stroke-linejoin="round"/>
<rect x="251" y="1192.8" width="22.5" height="6.3" rx="1.2" stroke="#c5c5c5" stroke-width="2"/><path d="M254.5 1193.8V1195.8M258.3 1193.8V1195.8M262 1193.8V1195.8M265.8 1193.8V1195.8M269.5 1193.8V1195.8" stroke="#c5c5c5" stroke-width="1.6"/>
<rect x="251" y="1202.5" width="22.5" height="6.3" rx="1.2" stroke="#c5c5c5" stroke-width="2"/><path d="M254.5 1203.5V1205.5M258.3 1203.5V1205.5M262 1203.5V1205.5M265.8 1203.5V1205.5M269.5 1203.5V1205.5" stroke="#c5c5c5" stroke-width="1.6"/>
<rect x="251" y="1212.8" width="22.5" height="6.3" rx="1.2" stroke="#c5c5c5" stroke-width="2"/><path d="M254.5 1213.8V1215.8M258.3 1213.8V1215.8M262 1213.8V1215.8M265.8 1213.8V1215.8M269.5 1213.8V1215.8" stroke="#c5c5c5" stroke-width="1.6"/>
<path d="M263.8 1260.9H249V1238.6H275.6V1251.2M249 1243.7H275.6" stroke="#c5c5c5" stroke-width="2"/>
<path d="M256.30 1252.90L265.50 1252.90M257.65 1249.65L264.15 1256.15M260.90 1248.30L260.90 1257.50M264.15 1249.65L257.65 1256.15" stroke="#c5c5c5" stroke-width="1.7"/><circle cx="260.9" cy="1252.9" r="2" fill="#23262b" stroke="#c5c5c5" stroke-width="1.5"/><path d="M266.60 1258.60L275.80 1258.60M267.95 1255.35L274.45 1261.85M271.20 1254.00L271.20 1263.20M274.45 1255.35L267.95 1261.85" stroke="#c5c5c5" stroke-width="1.7"/><circle cx="271.2" cy="1258.6" r="2" fill="#23262b" stroke="#c5c5c5" stroke-width="1.5"/>
<path d="M137.5 1411L145.5 1403L137.5 1395M153.5 1390.5L148 1396L153.5 1401.5" stroke="#ffffff" stroke-width="2"/>
<circle cx="210" cy="1402" r="11" stroke="#999ca0" stroke-width="2"/><path d="M205 1397L215 1407M215 1397L205 1407" stroke="#999ca0" stroke-width="2"/>
<path d="M267 1390.5L278 1411H256Z" stroke="#999ca0" stroke-width="2" stroke-linejoin="round"/><path d="M267 1397V1404M267 1406.5V1408.5" stroke="#999ca0" stroke-width="2"/>
<path d="M1436 1408C1436 1404 1437.5 1401 1441.2 1400.6V1410.5C1443.5 1411.3 1446.5 1411.6 1450 1411.6C1453.5 1411.6 1456.5 1411.3 1459.1 1410.5V1400.6C1462.5 1401 1463.8 1404 1463.8 1408C1463.8 1411.5 1458 1414 1450 1414C1442 1414 1436 1411.5 1436 1408Z" fill="#999ca0"/>
<circle cx="1444.7" cy="1396" r="4.6" stroke="#999ca0" stroke-width="2.4"/><circle cx="1455" cy="1396" r="4.6" stroke="#999ca0" stroke-width="2.4"/><path d="M1441.2 1401H1459.1" stroke="#999ca0" stroke-width="2"/><path d="M1446.3 1404V1408.4M1452.5 1404V1408.4" stroke="#999ca0" stroke-width="2"/>
<path d="M1500.1 1390.8H1513.6L1519.3 1396.6V1413.3H1500.1Z" stroke="#999ca0" stroke-width="2" stroke-linejoin="round"/><text x="1502.9" y="1401.9" font-family="Liberation Serif" font-weight="bold" font-size="9.6" fill="#999ca0" letter-spacing="1.5">01</text><text x="1502.9" y="1410.8" font-family="Liberation Serif" font-weight="bold" font-size="9.6" fill="#999ca0" letter-spacing="1.5">10</text>
<path d="M1661 1392L1676 1402L1661 1412Z" stroke="#999ca0" stroke-width="2" stroke-linejoin="round"/>
<path d="M2139 1408H2161M2142 1408V1400C2142 1395 2145 1392 2150 1392M2158 1401V1408M2147 1411H2153" stroke="#999ca0" stroke-width="2"/><circle cx="2157" cy="1392" r="4.5" fill="#999ca0"/>
</svg>
<div id="frame"></div>
</body></html>
